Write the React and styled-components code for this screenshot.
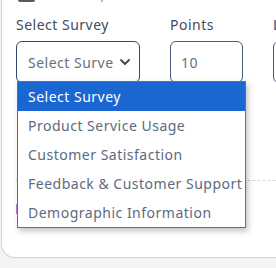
import React from "react";
import styled, { createGlobalStyle } from "styled-components";

const GlobalStyle = createGlobalStyle`
  html, body {
    margin: 0;
    padding: 0;
    background: #f4f4f5;
    font-family: 'Noto Sans', 'Liberation Sans', sans-serif;
    letter-spacing: 0.5px;
  }
`

const Viewport = styled.div`
  width: 276px;
  height: 268px;
  overflow: hidden;
`

const Card = styled.div`
  box-sizing: border-box;
  width: 340px;
  margin: -17px 0 0 1px;
  padding: 0 0 0 14px;
  height: 275px;
  background: #ffffff;
  border-left: 1px solid #d2d2d2;
  border-bottom: 1px solid #d2d2d2;
  border-bottom-left-radius: 14px;
  display: flex;
  flex-direction: column;
`

const TopRow = styled.div`
  display: flex;
  align-items: flex-start;
  gap: 66px;
  height: 19px;
  padding-left: 2px;
`

const Checkbox = styled.span`
  box-sizing: border-box;
  width: 17px;
  height: 19px;
  border: 2px solid #5a5a5a;
  border-radius: 2px;
`

const Asterisk = styled.span`
  width: 2px;
  height: 2px;
  margin-top: 17px;
  background: #f0a0b0;
`

const FieldsRow = styled.div`
  display: flex;
  gap: 30px;
  margin-top: 13px;
`

const Field = styled.div`
  position: relative;
  flex-shrink: 0;
  display: flex;
  flex-direction: column;
  width: ${(p) => p.width}px;
`

const Label = styled.span`
  font-size: 14px;
  line-height: 20px;
  color: #3f4c62;
  margin-bottom: 6px;
  white-space: nowrap;
`

const SelectBox = styled.div`
  box-sizing: border-box;
  height: 42px;
  border: 1.5px solid #2d4a72;
  border-radius: 6px;
  display: flex;
  align-items: center;
  padding: 0 8px 0 11px;
  gap: 6px;
`

const SelectText = styled.span`
  flex: 1;
  overflow: hidden;
  white-space: nowrap;
  font-size: 14px;
  color: #66707e;
`

const Input = styled.div`
  box-sizing: border-box;
  height: 42px;
  border: 1px solid #4b5a7a;
  border-radius: 6px;
  display: flex;
  align-items: center;
  padding-left: 10px;
  font-size: 14px;
  color: #66707e;
`

const Dropdown = styled.ul`
  position: absolute;
  top: 66px;
  left: 1px;
  width: 229px;
  box-sizing: border-box;
  margin: 0;
  padding: 0;
  list-style: none;
  background: #ffffff;
  border: 1px solid #6e6e6e;
  box-shadow: 2px 3px 6px rgba(0, 0, 0, 0.25);
  z-index: 2;
`

const Option = styled.li`
  height: 29px;
  display: flex;
  align-items: center;
  padding-left: 10px;
  font-size: 14px;
  white-space: nowrap;
  color: ${(p) => (p.selected ? "#ffffff" : "#5b6a80")};
  background: ${(p) => (p.selected ? "#1b67d1" : "transparent")};
`

const Divider = styled.div`
  margin-top: 97px;
  border-top: 1px dashed #d4d4d4;
`

const Tag = styled.span`
  margin: 23px 0 0 0;
  width: 40px;
  height: 10px;
  background: #b97fd6;
`

const options = [
  "Select Survey",
  "Product Service Usage",
  "Customer Satisfaction",
  "Feedback & Customer Support",
  "Demographic Information",
]

function App() {
  return (
    <Viewport>
      <GlobalStyle />
      <Card>
        <TopRow>
          <Checkbox />
          <Asterisk />
        </TopRow>
        <FieldsRow>
          <Field width={124}>
            <Label>Select Survey</Label>
            <SelectBox>
              <SelectText>Select Survey</SelectText>
              <svg width="12" height="12" viewBox="0 0 12 12" fill="none">
                <path d="M2 4l4 4 4-4" stroke="#444" strokeWidth="1.8" strokeLinecap="round" strokeLinejoin="round" />
              </svg>
            </SelectBox>
            <Dropdown>
              {options.map((o, i) => (
                <Option key={o} selected={i === 0}>{o}</Option>
              ))}
            </Dropdown>
          </Field>
          <Field width={73}>
            <Label>Points</Label>
            <Input>10</Input>
          </Field>
          <Field width={80}>
            <Label>Limit</Label>
            <Input />
          </Field>
        </FieldsRow>
        <Divider />
        <Tag />
      </Card>
    </Viewport>
  );
}

export default App
